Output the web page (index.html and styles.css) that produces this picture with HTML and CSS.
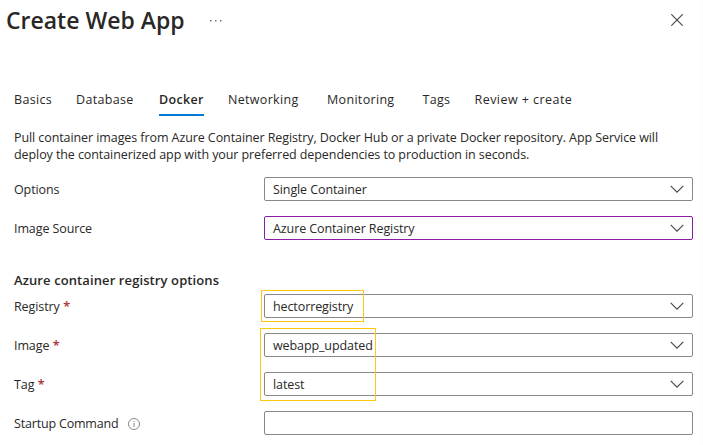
FILE: index.html
```html
<!DOCTYPE html>
<html lang="en">
<head>
<meta charset="utf-8">
<title>Create Web App</title>
<link rel="stylesheet" href="styles.css">
</head>
<body>
<svg class="defs" width="0" height="0" aria-hidden="true">
  <symbol id="chevron" viewBox="0 0 14 8"><path d="M.7 .8 7 7.1 13.3 .8" fill="none" stroke="#484644" stroke-width="1.1"/></symbol>
</svg>
<main class="blade">
  <header class="head">
    <h1 class="title">Create Web App</h1>
    <svg class="more" width="12" height="2" viewBox="0 0 12 2" fill="#767472"><path d="M0 0h1.5v1.5H0zM5 0h1.5v1.5H5zM10 0h1.5v1.5H10z"/></svg>
    <svg class="close" width="12" height="12" viewBox="0 0 12 12" fill="none" stroke="#484644" stroke-width="1.1"><path d="M.3 .3 11.7 11.7M11.7 .3 .3 11.7"/></svg>
  </header>
  <nav class="tabs">
    <a class="tab basics"><span>Basics</span></a>
    <a class="tab database"><span>Database</span></a>
    <a class="tab docker active"><span>Docker</span></a>
    <a class="tab networking"><span>Networking</span></a>
    <a class="tab monitoring"><span>Monitoring</span></a>
    <a class="tab tags"><span>Tags</span></a>
    <a class="tab review"><span>Review + create</span></a>
  </nav>
  <p class="intro"><span class="line1">Pull container images from Azure Container Registry, Docker Hub or a private Docker repository. App Service will</span><br><span class="line2">deploy the containerized app with your preferred dependencies to production in seconds.</span></p>
  <section class="fields">
    <div class="row"><label>Options</label><div class="box"><span>Single Container</span><svg class="chev"><use href="#chevron"/></svg></div></div>
    <div class="row"><label>Image Source</label><div class="box edited"><span>Azure Container Registry</span><svg class="chev"><use href="#chevron"/></svg></div></div>
  </section>
  <h2 class="subhead">Azure container registry options</h2>
  <section class="fields">
    <div class="row"><label>Registry <b>*</b></label><div class="box"><span>hectorregistry</span><svg class="chev"><use href="#chevron"/></svg><i class="mark mark-registry"></i></div></div>
    <div class="row"><label>Image <b>*</b></label><div class="box"><span>webapp_updated</span><svg class="chev"><use href="#chevron"/></svg><i class="mark mark-image"></i></div></div>
    <div class="row"><label>Tag <b>*</b></label><div class="box"><span>latest</span><svg class="chev"><use href="#chevron"/></svg></div></div>
    <div class="row"><label class="startup">Startup Command<svg class="info" width="12" height="12" viewBox="0 0 12 12" fill="none" stroke="#8a8886"><circle cx="6" cy="6" r="5.5"/><path d="M6 5v4M6 3v1"/></svg></label><div class="box"></div></div>
  </section>
</main>
</body>
</html>
```
FILE: styles.css
```css
* { box-sizing: border-box; }
body { margin: 0; background: #fff; color: #292827; font: 12.5px/17px "Open Sans", "Noto Sans", sans-serif; letter-spacing: -.1px; overflow: hidden; }
.defs { position: absolute; }
.blade { width: 703px; height: 445px; border-right: 3px solid #fdfdfd; }
.head { display: flex; align-items: center; height: 40px; padding: 0 17px 0 6px; }
.title { margin: 0; width: 204px; font-size: 23px; line-height: 32px; font-weight: 600; letter-spacing: 0; white-space: nowrap; }
.more { margin-top: 1px; }
.close { margin-left: auto; }
.tabs { display: flex; height: 26px; margin: 50px 0 0 14px; }
.tab { height: 26px; line-height: 20px; white-space: nowrap; letter-spacing: .32px; }
.basics { width: 62px; }
.database { width: 83px; }
.docker { width: 45px; margin-right: 24px; }
.networking { width: 99px; }
.monitoring { width: 95.5px; }
.tags { width: 52px; }
.review { letter-spacing: .45px; }
.active { font-weight: 600; border-bottom: 2px solid #0078d4; }
.intro { margin: 13px 0 0 14px; height: 48px; white-space: nowrap; letter-spacing: -.085px; }
.fields { display: flex; flex-direction: column; gap: 15px; margin-left: 14px; }
.row { display: grid; grid-template-columns: 250px 429px; height: 24px; align-items: center; }
label { display: flex; align-items: center; }
label b { color: #a4262c; margin-left: 3.5px; font-size: 12.5px; font-weight: 400; -webkit-text-stroke: .2px #a4262c; }
.startup { letter-spacing: -.18px; }
.info { margin: 1px 0 0 10px; }
.box { position: relative; display: flex; align-items: center; justify-content: space-between; height: 24px; padding: 0 8px; border: 1px solid #8a8886; border-radius: 2px; }
.edited { border-color: #881fa3; }
.chev { width: 14px; height: 8px; margin-right: 0; }
.subhead { margin: 32px 0 5px 14px; font-size: 13px; line-height: 17px; font-weight: 600; letter-spacing: .1px; }
.mark { position: absolute; border: 1px solid #fcc810; }
.mark-registry { left: -4px; top: -5px; width: 103px; height: 32px; }
.mark-image { left: -5px; top: -6px; width: 116px; height: 73px; z-index: 1; }
```
